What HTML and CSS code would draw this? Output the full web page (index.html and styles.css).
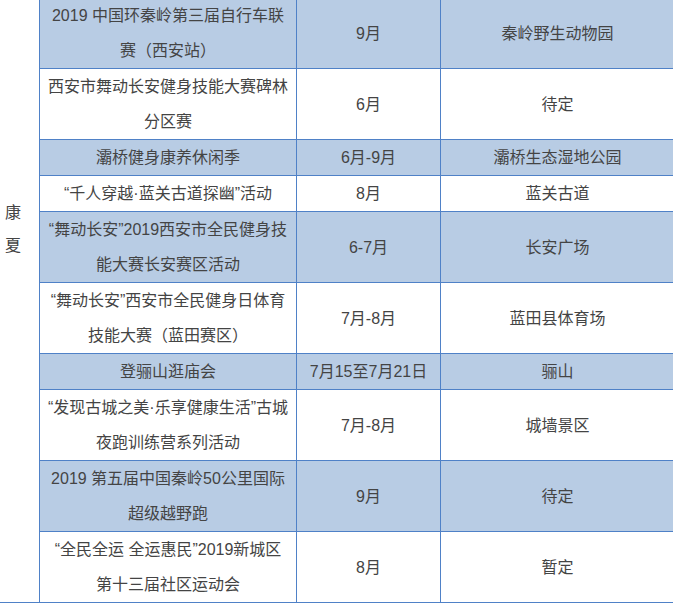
FILE: index.html
```html
<!DOCTYPE html>
<html lang="zh-CN">
<head>
<meta charset="utf-8">
<title>活动安排</title>
<link rel="stylesheet" href="styles.css">
</head>
<body>
<div class="page">
<table class="schedule">
  <colgroup>
    <col class="c-season">
    <col class="c-name">
    <col class="c-date">
    <col class="c-place">
  </colgroup>
  <tbody>
    <tr class="blue">
      <td class="season" rowspan="10">康<br>夏</td>
      <td>2019 中国环秦岭第三届自行车联赛（西安站）</td>
      <td>9月</td>
      <td>秦岭野生动物园</td>
    </tr>
    <tr>
      <td>西安市舞动长安健身技能大赛碑林分区赛</td>
      <td>6月</td>
      <td>待定</td>
    </tr>
    <tr class="blue">
      <td>灞桥健身康养休闲季</td>
      <td>6月-9月</td>
      <td>灞桥生态湿地公园</td>
    </tr>
    <tr>
      <td>“千人穿越·蓝关古道探幽”活动</td>
      <td>8月</td>
      <td>蓝关古道</td>
    </tr>
    <tr class="blue">
      <td>“舞动长安”2019西安市全民健身技能大赛长安赛区活动</td>
      <td>6-7月</td>
      <td>长安广场</td>
    </tr>
    <tr>
      <td>“舞动长安”西安市全民健身日体育技能大赛（蓝田赛区）</td>
      <td>7月-8月</td>
      <td>蓝田县体育场</td>
    </tr>
    <tr class="blue">
      <td>登骊山逛庙会</td>
      <td>7月15至7月21日</td>
      <td>骊山</td>
    </tr>
    <tr>
      <td>“发现古城之美·乐享健康生活”古城夜跑训练营系列活动</td>
      <td>7月-8月</td>
      <td>城墙景区</td>
    </tr>
    <tr class="blue">
      <td>2019 第五届中国秦岭50公里国际超级越野跑</td>
      <td>9月</td>
      <td>待定</td>
    </tr>
    <tr>
      <td>“全民全运 全运惠民”2019新城区第十三届社区运动会</td>
      <td>8月</td>
      <td>暂定</td>
    </tr>
  </tbody>
</table>
</div>
</body>
</html>
```
FILE: styles.css
```css
html, body {
  margin: 0;
  padding: 0;
  background: #ffffff;
}

.page {
  width: 673px;
  height: 605px;
  overflow: hidden;
}

.schedule {
  border-collapse: collapse;
  table-layout: fixed;
  width: 688px;
  margin: -3px 0 0 -14px;
  font-family: "Liberation Sans", "Noto Sans CJK SC", sans-serif;
  font-size: 16px;
  line-height: 35px;
  color: #444444;
}

.c-season { width: 53px; }
.c-name { width: 257px; }
.c-date { width: 144px; }
.c-place { width: 234px; }

.schedule td {
  border: 1px solid #4f81c7;
  padding: 0 7px;
  text-align: center;
  vertical-align: middle;
  background: #ffffff;
}

.schedule tr.blue td {
  background: #b8cce4;
}

.schedule tr td.season {
  background: #ffffff;
  line-height: 33px;
  padding-bottom: 142px;
}
```
